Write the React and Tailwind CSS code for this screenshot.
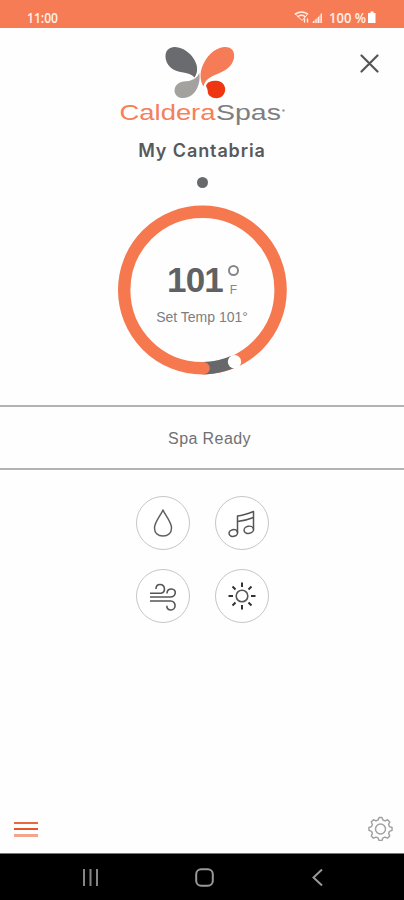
import React from 'react';

const StatusBar = () => (
  <header className="flex h-7 items-center justify-between bg-[#f67c56] pt-2 pr-[27px] pl-[27px] text-[#fff0ea]">
    <svg width="32" height="14" viewBox="0 0 32 14" className="overflow-visible">
      <text x="0" y="12" fontSize="14.500" fontWeight="600" textLength="31" lengthAdjust="spacingAndGlyphs" fill="currentColor" className="font-['Open_Sans',sans-serif]">11:00</text>
    </svg>
    <svg width="83" height="14" viewBox="0 0 83 14" className="overflow-visible">
      {/* wifi */}
      <g fill="none" stroke="currentColor" strokeLinecap="round">
        <path d="M1.500 3Q7.500 -1 13.500 3" strokeWidth="1.600" />
        <path d="M4 5.500Q7.500 3 11 5.500" strokeWidth="1.400" />
        <path d="M1.500 3L8 9.500L13 4" strokeWidth="1" />
        <path d="M10.500 8v3M13.500 11V8" strokeWidth="1.400" />
      </g>
      {/* signal */}
      <path d="M18 12L28 2V12Z" fill="#fbb49d" />
      <path d="M19.500 12v-2M22 12v-4M24.500 12v-6M27.300 12V2.500" stroke="currentColor" strokeWidth="1.100" />
      <text x="35" y="12" fontSize="14.500" fontWeight="600" textLength="37" lengthAdjust="spacingAndGlyphs" fill="currentColor" className="font-['Open_Sans',sans-serif]">100 %</text>
      <path d="M76.500 0.500h3v1.500h2v10h-7.500v-10h2.500z" fill="#fff" />
    </svg>
  </header>
);

const Logo = () => (
  <svg width="168" height="80" viewBox="0 0 168 80" role="img" aria-label="Caldera Spas">
    {/* butterfly petals */}
    <path d="M76.500 31.500C80.500 26 80 18 74.500 11C69 4 61.500 0.500 55 1.200C48.500 2 46.500 7.500 48 14C50 22 57 25 64 26.200C69.500 27 74 28.500 76.500 31.500Z" fill="#696b6f" />
    <path d="M85.500 40.500C82 35 81.500 27 84.500 20C88 11 96 2 106 1C113.500 0.500 117 5 116 12C114.500 20 107.500 24.500 100.500 27.500C92 31 87 33.500 85.500 40.500Z" fill="#f57c56" />
    <path d="M81.300 27C82.500 34 80.500 42 76 47C71.500 52 64 53.500 59.500 50.500C55.500 47.500 55.500 41.500 59.500 38C63.500 34.500 68 36 72.500 34.500C77 33 79.500 31 81.300 27Z" fill="#a3a29e" />
    <path d="M88 40C89 36 93 34.700 98.500 34.700C103.500 35 107 38.500 107.200 43C107.200 48.500 103.500 52.200 98.500 52.200C93.500 52 90 49.500 89.800 46C89.700 43.500 89 42 88 40Z" fill="#ee3610" />
    <g fontSize="22.500" className="font-['Liberation_Sans',sans-serif]">
      <text x="1.500" y="74" textLength="96" lengthAdjust="spacingAndGlyphs" fill="#f58059">Caldera</text>
      <text x="98" y="74" textLength="65" lengthAdjust="spacingAndGlyphs" fill="#7d7e82">Spas</text>
    </g>
    <circle cx="165.500" cy="64.500" r="1.200" fill="#999" />
  </svg>
);

const TempDial = () => (
  <div className="relative mt-4 h-[172px] w-[172px]">
    <svg width="172" height="172" viewBox="-86 -86 172 172" fill="none">
      <circle cx="0.400" r="78.200" stroke="#f5784f" strokeWidth="12.400" />
      <path d="M2 78.200A78.200 78.200 0 0 0 32 71.400" stroke="#66686b" strokeWidth="12.400" />
      <circle cx="1.500" cy="78.200" r="6.200" fill="#f5784f" />
      <circle cx="32.500" cy="71.700" r="6.700" fill="#fff" />
    </svg>
    <div className="absolute inset-0 flex flex-col items-center pt-[57px] font-['Liberation_Sans',sans-serif] text-[#5f6164]">
      <div className="flex h-9 items-start pl-[2px]">
        <span className="pt-px text-[35px] leading-9 font-bold tracking-[-0.8px]">101</span>
        <div className="ml-[5px] flex flex-col items-center pt-1">
          <span className="h-[11px] w-[11px] rounded-full border-2 border-[#85878a]" />
          <span className="mt-2 text-[12px] leading-3 text-[#85878a]">F</span>
        </div>
      </div>
      <p className="mt-3 text-[14px] leading-4 text-[#7c7e81]">Set Temp 101°</p>
    </div>
  </div>
);

const DropIcon = () => (
  <svg width="30" height="30" viewBox="0 0 30 30" fill="none" stroke="#606060" strokeWidth="1.500" strokeLinejoin="round">
    <path d="M15 2C13 7 6.500 14 6.500 20C6.500 25 10 28 15 28S23.500 25 23.500 20C23.500 14 17 7 15 2Z" />
  </svg>
);

const MusicIcon = () => (
  <svg width="30" height="30" viewBox="0 0 30 30" fill="none" stroke="#555" strokeWidth="1.500" strokeLinejoin="round">
    <path d="M10.500 25V8C15.500 7.500 21.500 5.500 26.500 3.500V21.500" />
    <path d="M10.500 13.500C15.500 13 21.500 11.500 26.500 9.500" />
    <ellipse cx="6.300" cy="25" rx="4.300" ry="3.400" transform="rotate(-12 6.300 25)" />
    <ellipse cx="21.800" cy="21.800" rx="4.800" ry="3.600" transform="rotate(-12 21.800 21.800)" />
  </svg>
);

const WindIcon = () => (
  <svg width="30" height="30" viewBox="0 0 30 30" fill="none" stroke="#555" strokeWidth="1.600">
    <path d="M2 12.200H13C18 12 17.500 3.500 12 3.500C9.500 3.500 8 5 8 8" />
    <path d="M2 16H22C28.500 16 29 8 23.500 8C21 8 19 9.500 19 12.500" />
    <path d="M2 20H22.500C29 20 28 29 23 29C20.500 29 18.800 27.500 18.800 24.800" />
  </svg>
);

const SunIcon = () => (
  <svg width="30" height="30" viewBox="0 0 30 30" fill="none" stroke="#333">
    <circle cx="15" cy="15" r="5.800" stroke="#555" strokeWidth="1.600" />
    <path strokeWidth="2" d="M15 1.500v4.500M15 24v4.500M1.500 15h4.500M24 15h4.500M5.500 5.500l3 3M21.500 21.500l3 3M5.500 24.500l3-3M21.500 8.500l3-3" />
  </svg>
);

const controls = [
  { id: 'water', label: 'Water', icon: <DropIcon /> },
  { id: 'music', label: 'Music', icon: <MusicIcon /> },
  { id: 'jets', label: 'Jets', icon: <WindIcon /> },
  { id: 'lights', label: 'Lights', icon: <SunIcon /> },
];

// eight rounded teeth around a ring
const GearIcon = () => (
  <svg width="25" height="25" viewBox="0 0 26 26" fill="none" stroke="#a0a0a0" strokeWidth="1.500" strokeLinejoin="round">
    <path d="M11.500 1.500h3l1 2.700 2.200.9 2.600-1.200 2.300 2.300-1.200 2.600.9 2.200 2.700 1v3l-2.700 1-.9 2.200 1.200 2.600-2.300 2.300-2.600-1.200-2.200.9-1 2.700h-3l-1-2.700-2.200-.9-2.600 1.200-2.300-2.300 1.200-2.600-.9-2.200-2.700-1v-3l2.700-1 .9-2.200-1.200-2.600 2.300-2.300 2.600 1.200 2.200-.9z" />
    <circle cx="13" cy="13.500" r="5.200" />
  </svg>
);

const App = () => {
  return (
    <div className="flex h-[900px] w-[404px] flex-col overflow-hidden bg-[#fefefe]">
      <StatusBar />

      <section className="relative flex h-[377px] flex-col items-center pt-[18px]">
        <button aria-label="Close" className="absolute top-[26px] right-[25px]">
          <svg width="19" height="19" viewBox="0 0 19 19" stroke="#55565a" strokeWidth="2.200" strokeLinecap="round">
            <path d="M1.500 1.500l16 16M17.500 1.500l-16 16" />
          </svg>
        </button>
        <Logo />
        <h1 className="mt-[14px] font-['Inter',sans-serif] text-[18px] leading-[22px] font-semibold tracking-[0.9px] text-[#58595c]">My Cantabria</h1>
        <span className="mt-[15px] h-[11px] w-[11px] rounded-full bg-[#68696b]" />
        <TempDial />
      </section>

      <section className="flex h-[65px] items-center justify-center border-y-2 border-[#b3b3b3] pt-[2px] pl-[15px]">
        <p className="font-['Liberation_Sans',sans-serif] text-[16px] tracking-[0.4px] text-[#707174]">Spa Ready</p>
      </section>

      <section className="grid grid-cols-[54px_54px] justify-center gap-x-[25px] gap-y-[19px] pt-[25.5px]">
        {controls.map((control) => (
          <button key={control.id} aria-label={control.label} className="flex h-[54px] w-[54px] items-center justify-center rounded-full border border-[#c6c6c6] bg-white">
            {control.icon}
          </button>
        ))}
      </section>

      <footer className="mt-auto flex h-[49px] items-center justify-between pr-[11px] pl-[14px]">
        <button aria-label="Menu" className="flex flex-col gap-1 pt-px">
          <span className="h-[2px] w-6 bg-[#e8683f]" />
          <span className="h-[2px] w-6 bg-[#e9552b]" />
          <span className="h-[3px] w-6 bg-[#f2a48c]" />
        </button>
        <button aria-label="Settings">
          <GearIcon />
        </button>
      </footer>

      <nav className="flex h-[47px] items-center justify-between border-t border-[#777] bg-black pr-[81px] pl-[82px]">
        <svg width="17" height="17" viewBox="0 0 17 17" stroke="#858585" strokeWidth="2">
          <path d="M2 0v17M8.500 0v17M15 0v17" />
        </svg>
        <svg width="19" height="19" viewBox="0 0 19 19" fill="none" stroke="#999" strokeWidth="2" className="mr-[3px]">
          <rect x="1.200" y="1.200" width="16.600" height="16.600" rx="5" />
        </svg>
        <svg width="11" height="17" viewBox="0 0 11 17" fill="none" stroke="#999" strokeWidth="2">
          <path d="M10 0.500L1.500 8.500L10 16.500" />
        </svg>
      </nav>
    </div>
  );
};

export default App;
